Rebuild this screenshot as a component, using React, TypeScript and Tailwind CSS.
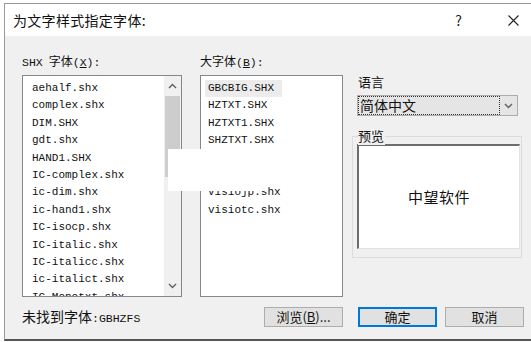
import React from 'react';

const cjk = '"Noto Sans CJK SC", "Noto Sans", sans-serif';
const mono = '"Liberation Mono", "Noto Sans CJK SC", monospace';

const shxFonts = [
  'aehalf.shx',
  'complex.shx',
  'DIM.SHX',
  'gdt.shx',
  'HAND1.SHX',
  'IC-complex.shx',
  'ic-dim.shx',
  'ic-hand1.shx',
  'IC-isocp.shx',
  'IC-italic.shx',
  'IC-italicc.shx',
  'ic-italict.shx',
  'IC-Monotxt.shx',
];

// rows 5 and 6 sit under the white patch in the screenshot
const bigFonts = ['GBCBIG.SHX', 'HZTXT.SHX', 'HZTXT1.SHX', 'SHZTXT.SHX', '', '', 'visiojp.shx', 'visiotc.shx'];

function Chevron({ up }: { up?: boolean }) {
  return (
    <svg width="9" height="6" viewBox="0 0 9 6" className="block">
      <path d={up ? 'M1 5 L4.5 1.5 L8 5' : 'M1 1 L4.5 4.5 L8 1'} fill="none" stroke="#606060" strokeWidth="1.4" />
    </svg>
  );
}

function Button({ label, primary }: { label: React.ReactNode; primary?: boolean }) {
  return (
    <div
      className={
        'w-[79px] h-[20px] flex items-center justify-center bg-[#e1e1e1] text-[13px] text-[#111] ' +
        (primary ? 'border-2 border-[#0078d7]' : 'border border-[#adadad]')
      }
      style={{ fontFamily: cjk }}
    >
      {label}
    </div>
  );
}

export default function App() {
  return (
    <div className="w-[531px] h-[342px] bg-white pt-[3px] pl-[4px] overflow-hidden relative">
      <div className="w-[540px] h-[338px] flex flex-col border-l border-t border-[#9a9a9a] border-b-2 border-b-[#555]">
        {/* title bar */}
        <div className="h-[32px] bg-white flex items-center pl-[8px]" style={{ fontFamily: cjk }}>
          <span className="text-[14px] text-[#111] tracking-[0.3px]">为文字样式指定字体:</span>
          <span className="ml-auto text-[14px] text-[#222] mr-[46px]">?</span>
          <span className="mr-[25px]">
            <svg width="11" height="11" viewBox="0 0 11 11">
              <path d="M0.5 0.5 L10.5 10.5 M10.5 0.5 L0.5 10.5" stroke="#222" strokeWidth="1.1" />
            </svg>
          </span>
        </div>

        {/* body */}
        <div className="flex-1 bg-[#f0f0f0] pl-[17px] pt-[16px] flex flex-col">
          <div className="flex">
            {/* SHX list */}
            <div className="w-[160px]">
              <div className="h-[23px] flex items-baseline text-[12px] text-[#111]" style={{ fontFamily: mono }}>
                <span className="text-[11.5px]">SHX</span>
                <span className="ml-[6px]" style={{ fontFamily: cjk }}>字体</span>
                <span className="text-[11.5px]">
                  (<span className="underline">X</span>):
                </span>
              </div>
              <div className="h-[222px] border border-[#828790] bg-white flex overflow-hidden">
                <div className="flex-1 pt-[4px] pl-[9px] text-[11px] leading-[17.4px] text-[#111]" style={{ fontFamily: mono }}>
                  {shxFonts.map((f) => (
                    <div key={f} className="whitespace-nowrap">
                      {f}
                    </div>
                  ))}
                </div>
                <div className="w-[17px] bg-[#f0f0f0] flex flex-col items-center">
                  <div className="h-[20px] flex items-center justify-center">
                    <Chevron up />
                  </div>
                  <div className="w-[15px] h-[81px] bg-[#cdcdcd]" />
                  <div className="flex-1" />
                  <div className="h-[20px] flex items-center justify-center">
                    <Chevron />
                  </div>
                </div>
              </div>
            </div>

            {/* big font list */}
            <div className="w-[143px] ml-[18px]">
              <div className="h-[23px] flex items-baseline text-[12px] text-[#111]" style={{ fontFamily: mono }}>
                <span style={{ fontFamily: cjk }}>大字体</span>
                <span className="text-[11.5px]">
                  (<span className="underline">B</span>):
                </span>
              </div>
              <div className="h-[222px] border border-[#828790] bg-white pt-[4px] pl-[4px] text-[11px] leading-[17.4px] text-[#111] overflow-hidden" style={{ fontFamily: mono }}>
                {bigFonts.map((f, i) => (
                  <div key={i} className={'w-fit h-[17.4px] pl-[3px] pr-[8px] whitespace-nowrap ' + (i === 0 ? 'bg-[#ececec]' : '')}>
                    {f}
                  </div>
                ))}
              </div>
            </div>

            {/* language and preview */}
            <div className="w-[168px] ml-[14px] pt-[21px]" style={{ fontFamily: cjk }}>
              <div className="text-[13px] leading-[18px] text-[#111] pl-[1px]">语言</div>
              <div className="mt-[4px] h-[21px] w-[161px] border border-[#adadad] bg-[#e5e5e5] flex items-center">
                <div className="h-[19px] w-[142px] border border-dotted border-[#333] flex items-center pl-[1px] text-[14px] text-[#111]">
                  简体中文
                </div>
                <div className="flex-1 flex justify-center">
                  <Chevron />
                </div>
              </div>
              <div className="relative mt-[20px] h-[122px] w-[170px] -ml-[5px] border border-[#dcdcdc]">
                <div className="absolute -top-[10px] left-[5px] bg-[#f0f0f0] text-[13px] leading-[18px] text-[#111] pr-[1px]">
                  预览
                </div>
                <div className="mt-[7px] ml-[4px] w-[163px] h-[105px] bg-white border-l-2 border-t-2 border-[#6d6d6d] border-r border-b border-r-[#e3e3e3] border-b-[#e3e3e3] flex items-center justify-center">
                  <span className="text-[15px] text-[#111] tracking-[0.5px]">中望软件</span>
                </div>
              </div>
            </div>
          </div>

          {/* bottom row */}
          <div className="mt-[10px] flex items-center h-[20px]" style={{ fontFamily: cjk }}>
            <div className="w-[242px] flex items-baseline text-[14px] text-[#111]">
              <span>未找到字体</span>
              <span className="text-[11.5px]" style={{ fontFamily: mono }}>
                :GBHZFS
              </span>
            </div>
            <Button
              label={
                <span>
                  浏览(<span className="underline">B</span>)...
                </span>
              }
            />
            <div className="ml-[15px]">
              <Button label="确定" primary />
            </div>
            <div className="ml-[8px]">
              <Button label="取消" />
            </div>
          </div>
        </div>
      </div>

      {/* white patch covering part of the lists */}
      <div className="absolute left-[168px] top-[149px] w-[100px] h-[42px] bg-white" />
    </div>
  );
}
